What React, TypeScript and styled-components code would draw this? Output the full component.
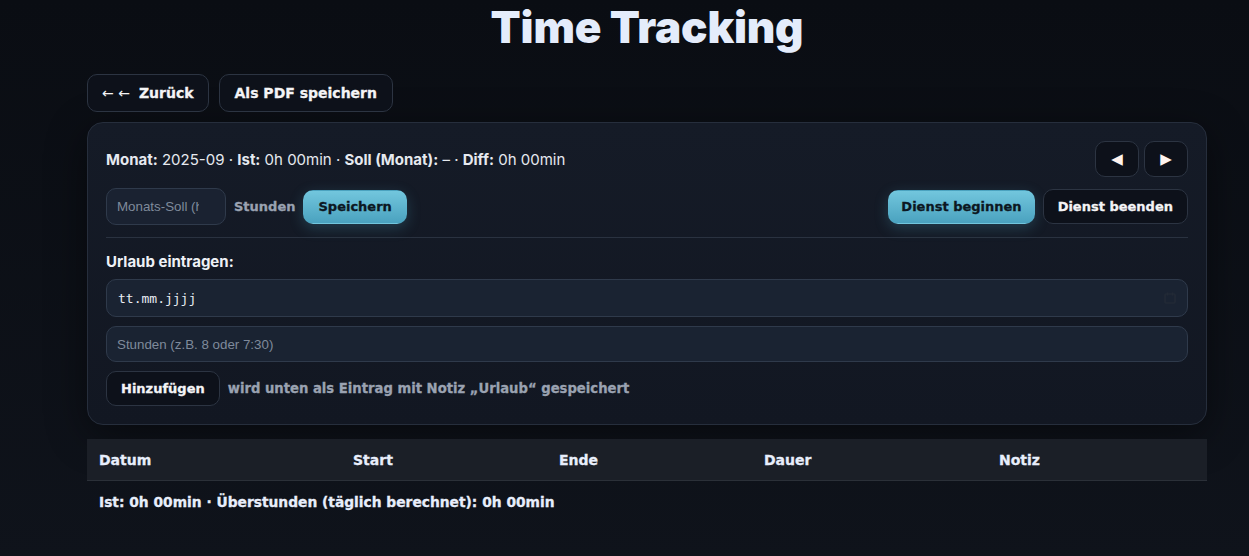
import React from 'react';
import styled, { createGlobalStyle } from 'styled-components';

const GlobalStyle = createGlobalStyle`
  html, body {
    margin: 0;
    padding: 0;
    background: linear-gradient(180deg, #0a0d13 0%, #0f131b 100%);
    min-height: 100vh;
    font-family: Inter, "Noto Sans", sans-serif;
    color: #e6e9ef;
  }
`;

const heavy = `"DejaVu Sans", Verdana, sans-serif`;

const Page = styled.div`
  padding: 0 42px 40px 87px;
`;

const Title = styled.h1`
  margin: 0;
  padding-top: 1px;
  text-align: center;
  font-family: Inter, sans-serif;
  font-weight: 900;
  font-size: 44px;
  line-height: 52px;
  color: #e4ecfb;
  letter-spacing: -0.2px;
`;

const Toolbar = styled.div`
  display: flex;
  gap: 10px;
  margin-top: 21px;
  margin-bottom: 10px;
`;

const Button = styled.button<{ $primary?: boolean; $h?: number; $size?: number; $px?: number }>`
  height: ${(p) => p.$h ?? 34}px;
  padding: 0 ${(p) => p.$px ?? 14}px;
  border-radius: 10px;
  font-family: ${heavy};
  font-weight: 700;
  font-size: ${(p) => p.$size ?? 13}px;
  -webkit-text-stroke: 0.3px currentColor;
  cursor: pointer;
  white-space: nowrap;
  color: ${(p) => (p.$primary ? '#0c1722' : '#f4f4f6')};
  border: 1px solid ${(p) => (p.$primary ? 'transparent' : '#2c3442')};
  background: ${(p) =>
    p.$primary ? 'linear-gradient(180deg, #72c6dd 0%, #4aa2bf 100%)' : '#0d111a'};
  box-shadow: ${(p) => (p.$primary ? '0 4px 14px rgba(80, 170, 200, 0.25)' : 'none')};
`;

const Arrows = styled.span`
  font-weight: 400;
  -webkit-text-stroke: 0;
  margin-right: 9px;
`;

const Card = styled.section`
  border: 1px solid #262e3c;
  border-radius: 16px;
  background: linear-gradient(180deg, #151b27 0%, #121722 100%);
  box-shadow: 0 10px 40px rgba(0, 0, 0, 0.45);
  padding: 18px;
`;

const Row = styled.div<{ $mt?: number }>`
  display: flex;
  align-items: center;
  justify-content: space-between;
  margin-top: ${(p) => p.$mt ?? 0}px;
`;

const Group = styled.div<{ $gap?: number }>`
  display: flex;
  align-items: center;
  gap: ${(p) => p.$gap ?? 8}px;
`;

const Summary = styled.div`
  font-size: 15px;
  color: #e6e9ef;
  b {
    font-weight: 700;
  }
`;

const NavButton = styled.button`
  width: 44px;
  height: 36px;
  border-radius: 10px;
  border: 1px solid #2c3442;
  background: #0d111a;
  color: #fff3ee;
  font-family: "DejaVu Sans", sans-serif;
  font-size: 15px;
  padding: 0;
  cursor: pointer;
`;

const SmallInput = styled.input`
  width: 120px;
  height: 37px;
  box-sizing: border-box;
  padding: 0 26px 0 10px;
  border-radius: 10px;
  border: 1px solid #2f3a4b;
  background: #1a2231;
  color: #e6e9ef;
  font-family: "Liberation Sans", Arial, sans-serif;
  font-size: 13.33px;
  outline: none;
  &::placeholder {
    color: #7f8a9b;
  }
`;

const Muted = styled.span<{ $size?: number }>`
  color: #9aa2b1;
  font-family: ${heavy};
  font-weight: 700;
  font-size: ${(p) => p.$size ?? 13.2}px;
  -webkit-text-stroke: 0.3px currentColor;
`;

const Divider = styled.hr`
  border: none;
  border-top: 1px solid #2a3240;
  margin: 12px 0 14px;
`;

const Label = styled.div`
  font-weight: 700;
  font-size: 15px;
  color: #eef1f6;
  margin-bottom: 8px;
`;

const Field = styled.div`
  display: flex;
  align-items: center;
  justify-content: space-between;
  height: 38px;
  box-sizing: border-box;
  padding: 0 10px 0 11px;
  border-radius: 10px;
  border: 1px solid #2f3a4b;
  background: #1a2332;
  font-family: "DejaVu Sans Mono", monospace;
  font-size: 13px;
  color: #e8ecf2;
`;

const WideInput = styled(SmallInput)`
  width: 100%;
  height: 36px;
  margin-top: 9px;
  padding-right: 10px;
  background: #1a2332;
`;

const Table = styled.div`
  margin-top: 14px;
`;

const HeadRow = styled.div`
  display: grid;
  grid-template-columns: 254px 206px 205px 235px 1fr;
  height: 41px;
  align-items: center;
  background: #1b1f27;
  border-bottom: 1px solid #2b3038;
`;

const HeadCell = styled.div`
  padding-left: 12px;
  font-family: ${heavy};
  font-weight: 700;
  font-size: 14px;
  -webkit-text-stroke: 0.3px currentColor;
  color: #e8eefb;
`;

const Footer = styled.div`
  padding: 13px 12px;
  font-family: ${heavy};
  font-weight: 700;
  font-size: 13.8px;
  -webkit-text-stroke: 0.3px currentColor;
  color: #e8eefb;
`;

const CalendarIcon = () => (
  <svg width="14" height="14" viewBox="0 0 14 14" fill="none" stroke="#222a36" strokeWidth="1.6">
    <rect x="2" y="3" width="10" height="9" rx="1" />
    <path d="M4.5 1.5v3M9.5 1.5v3" />
  </svg>
);

const App: React.FC = () => {
  return (
    <>
      <GlobalStyle />
      <Page>
        <Title>Time Tracking</Title>
        <Toolbar>
          <Button $h={38} $size={14}>
            <Arrows>← ←</Arrows>Zurück
          </Button>
          <Button $h={38} $size={14} $px={15}>Als PDF speichern</Button>
        </Toolbar>
        <Card>
          <Row>
            <Summary>
              <b>Monat:</b> 2025-09 · <b>Ist:</b> 0h 00min · <b>Soll (Monat):</b> – · <b>Diff:</b> 0h 00min
            </Summary>
            <Group $gap={5}>
              <NavButton>◀</NavButton>
              <NavButton>▶</NavButton>
            </Group>
          </Row>
          <Row $mt={11}>
            <Group>
              <SmallInput placeholder="Monats-Soll (h)" />
              <Muted $size={13}>Stunden</Muted>
              <Button $primary>Speichern</Button>
            </Group>
            <Group>
              <Button $primary $px={12}>Dienst beginnen</Button>
              <Button $h={35}>Dienst beenden</Button>
            </Group>
          </Row>
          <Divider />
          <Label>Urlaub eintragen:</Label>
          <Field>
            <span>tt.mm.jjjj</span>
            <CalendarIcon />
          </Field>
          <WideInput placeholder="Stunden (z.B. 8 oder 7:30)" />
          <Row $mt={9}>
            <Group $gap={8}>
              <Button $h={35}>Hinzufügen</Button>
              <Muted>wird unten als Eintrag mit Notiz „Urlaub“ gespeichert</Muted>
            </Group>
          </Row>
        </Card>
        <Table>
          <HeadRow>
            <HeadCell>Datum</HeadCell>
            <HeadCell>Start</HeadCell>
            <HeadCell>Ende</HeadCell>
            <HeadCell>Dauer</HeadCell>
            <HeadCell>Notiz</HeadCell>
          </HeadRow>
          <Footer>Ist: 0h 00min · Überstunden (täglich berechnet): 0h 00min</Footer>
        </Table>
      </Page>
    </>
  );
};

export default App;
